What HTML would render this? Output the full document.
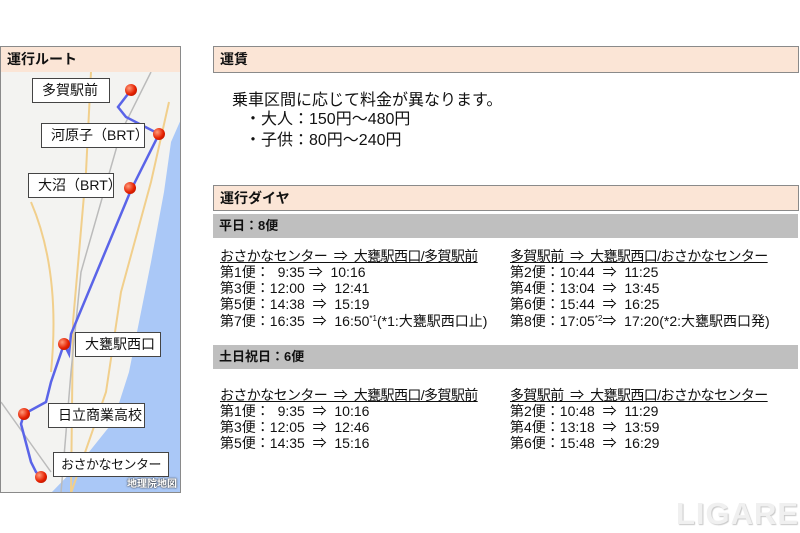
<!DOCTYPE html>
<html><head><meta charset="utf-8"><style>
*{margin:0;padding:0;box-sizing:border-box}
body{width:800px;height:533px;background:#fff;position:relative;overflow:hidden;font-family:"Liberation Sans","Noto Sans CJK JP",sans-serif;color:#111}
.hdr{position:absolute;background:#fbe5d6;border:1px solid #8a8a8a;font-weight:bold;font-size:14px;padding-left:6px;line-height:24px}
.gbar{position:absolute;left:213px;width:585px;height:24px;background:#bfbfbf;font-weight:bold;font-size:13px;padding-left:6px;line-height:24px}
.t{position:absolute;font-size:14px;white-space:pre;line-height:16px}
.u{text-decoration:underline;letter-spacing:-0.6px}
.s{position:relative;top:-5px;font-size:8px}
.lbl{position:absolute;background:#fff;border:1px solid #444;font-size:14px;line-height:23px;padding:0 0 0 9px;white-space:nowrap;height:25px;overflow:hidden}
.dot{position:absolute;width:12px;height:12px;border-radius:50%;background:radial-gradient(circle at 35% 35%,#ff9a7a,#e52000 55%,#a01000)}
</style></head><body>
<div class="hdr" style="left:0;top:46px;width:181px;height:27px">運行ルート</div>
<div style="position:absolute;left:0;top:72px;width:181px;height:421px;border:1px solid #8a8a8a;border-top:none;overflow:hidden;background:#f3f3f1">
<svg width="181" height="421" style="position:absolute;left:0;top:0">
<path d="M181 45 L170 70 L163 120 L150 190 L138 250 L128 300 L112 350 L80 390 L50 421 L181 421Z" fill="#aac8f7"/>
<g fill="none" stroke="#f1cf8c" stroke-width="2">
<path d="M90 0 L85 100 L72 250 L70 421"/><path d="M168 30 L150 110 L120 220 L105 320 L70 421"/><path d="M30 130 Q60 200 50 300"/>
</g>
<g fill="none" stroke="#bbb" stroke-width="1.5"><path d="M150 0 L120 60 L80 200 L70 300 L60 421"/><path d="M0 330 L50 400"/></g>
<path d="M130 18 L117 35 L125 45 L158 62 L130 118 L70 262 L68 282 L63 272 L50 310 L45 330 L23 342 L20 352 L30 390 L35 400 L40 405" fill="none" stroke="#5a64e8" stroke-width="2.5"/>
</svg>
<div class="dot" style="left:124px;top:12px"></div>
<div class="dot" style="left:152px;top:56px"></div>
<div class="dot" style="left:123px;top:110px"></div>
<div class="dot" style="left:57px;top:266px"></div>
<div class="dot" style="left:17px;top:336px"></div>
<div class="dot" style="left:34px;top:399px"></div>
<div class="lbl" style="left:31px;top:6px;width:78px">多賀駅前</div>
<div class="lbl" style="left:40px;top:51px;width:104px">河原子（BRT）</div>
<div class="lbl" style="left:27px;top:101px;width:86px">大沼（BRT）</div>
<div class="lbl" style="left:74px;top:260px;width:86px">大甕駅西口</div>
<div class="lbl" style="left:47px;top:331px;width:97px">日立商業高校</div>
<div class="lbl" style="left:52px;top:380px;font-size:13px;padding:0 7px;letter-spacing:-0.5px">おさかなセンター</div>
<div style="position:absolute;right:3px;bottom:2px;font-size:10px;color:#fff;font-weight:bold;text-shadow:0 0 2px #333,0 0 1px #333">地理院地図</div>
</div>

<div class="hdr" style="left:213px;top:46px;width:586px;height:27px">運賃</div>
<div class="t" style="left:232px;top:91px;font-size:16px;line-height:20px">乗車区間に応じて料金が異なります。</div>
<div class="t" style="left:245px;top:110px;font-size:16px;line-height:20px">・大人：150円～480円</div>
<div class="t" style="left:245px;top:131px;font-size:16px;line-height:20px">・子供：80円～240円</div>

<div class="hdr" style="left:213px;top:185px;width:586px;height:26px">運行ダイヤ</div>
<div class="gbar" style="top:214px">平日：8便</div>
<div class="t u" style="left:220px;top:248px">おさかなセンター  ⇒  大甕駅西口/多賀駅前</div>
<div class="t" style="left:220px;top:264px">第1便：  9:35 ⇒  10:16</div>
<div class="t" style="left:220px;top:280px">第3便：12:00  ⇒  12:41</div>
<div class="t" style="left:220px;top:296px">第5便：14:38  ⇒  15:19</div>
<div class="t" style="left:220px;top:313px">第7便：16:35  ⇒  16:50<span class="s">*1</span>(*1:大甕駅西口止)</div>
<div class="t u" style="left:510px;top:248px">多賀駅前  ⇒  大甕駅西口/おさかなセンター</div>
<div class="t" style="left:510px;top:264px">第2便：10:44  ⇒  11:25</div>
<div class="t" style="left:510px;top:280px">第4便：13:04  ⇒  13:45</div>
<div class="t" style="left:510px;top:296px">第6便：15:44  ⇒  16:25</div>
<div class="t" style="left:510px;top:313px">第8便：17:05<span class="s">*2</span>⇒  17:20(*2:大甕駅西口発)</div>

<div class="gbar" style="top:345px">土日祝日：6便</div>
<div class="t u" style="left:220px;top:387px">おさかなセンター  ⇒  大甕駅西口/多賀駅前</div>
<div class="t" style="left:220px;top:403px">第1便：  9:35  ⇒  10:16</div>
<div class="t" style="left:220px;top:419px">第3便：12:05  ⇒  12:46</div>
<div class="t" style="left:220px;top:435px">第5便：14:35  ⇒  15:16</div>
<div class="t u" style="left:510px;top:387px">多賀駅前  ⇒  大甕駅西口/おさかなセンター</div>
<div class="t" style="left:510px;top:403px">第2便：10:48  ⇒  11:29</div>
<div class="t" style="left:510px;top:419px">第4便：13:18  ⇒  13:59</div>
<div class="t" style="left:510px;top:435px">第6便：15:48  ⇒  16:29</div>

<div style="position:absolute;left:676px;top:497px;font-size:31px;font-weight:bold;color:#f0f0f0;letter-spacing:1px;text-shadow:1px 1px 1px #c8c8c8;font-family:'Liberation Sans',sans-serif;line-height:34px">LIGARE</div>
</body></html>
